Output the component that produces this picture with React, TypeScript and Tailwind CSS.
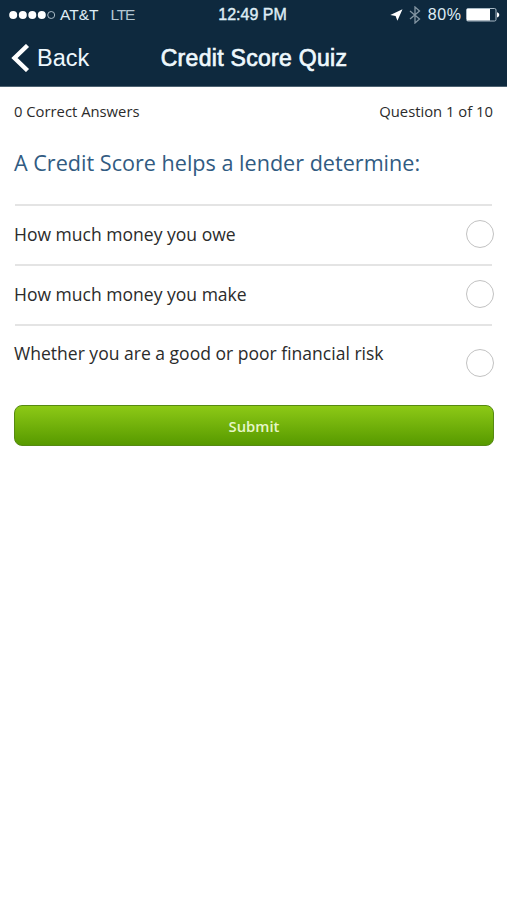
import { useState } from 'react';

const answers = [
    { id: 'owe', label: 'How much money you owe', row: 'h-[60px]', text: 'pb-[2px]', radio: 'pb-[2px]' },
    { id: 'make', label: 'How much money you make', row: 'h-[60px]', text: 'pb-[2px]', radio: 'pb-[2px]' },
    { id: 'risk', label: 'Whether you are a good or poor financial risk', row: 'h-[81px]', text: 'pb-[25px]', radio: 'pb-[5px]' },
];

function StatusBar() {
    return (
        <div className="grid h-[30px] grid-cols-3 items-center pr-[7px] pl-[9px] text-[16px] leading-[30px] text-[#dfedf5]">
            <div className="flex items-center whitespace-nowrap">
                <svg width="47" height="10" viewBox="0 0 47 10" fill="#fff">
                    <circle cx="4.2" cy="5" r="4" />
                    <circle cx="13.8" cy="5" r="4" />
                    <circle cx="23.3" cy="5" r="4" />
                    <circle cx="32.8" cy="5" r="4" />
                    <circle cx="42.2" cy="5" r="3.5" fill="none" stroke="#a9bac6" />
                </svg>
                <span className="ml-[4px] text-[15.5px]">AT&amp;T</span>
                <span className="ml-[12px] text-[15.5px] tracking-[-1.2px] text-[#b3c5d1]">LTE</span>
            </div>
            <div className="pr-[4px] text-center whitespace-nowrap [-webkit-text-stroke:0.4px_currentColor]">12:49 PM</div>
            <div className="flex items-center justify-end whitespace-nowrap">
                <svg width="13" height="12" viewBox="0 0 13 12" fill="#fff">
                    <path d="M12.5 0.3 0.3 6 5.6 6.9 7.4 11.8Z" />
                </svg>
                <svg className="ml-[6px]" width="12" height="18" viewBox="0 0 12 18" fill="none" stroke="#8496a3" strokeWidth="1.3">
                    <path d="M1 5 10.5 13 6 17V1L10.5 5 1 13" />
                </svg>
                <span className="ml-[7px] tracking-[0.6px]">80%</span>
                <svg className="ml-[4.5px]" width="34" height="14" viewBox="0 0 34 14">
                    <rect x="0.5" y="0.5" width="29.5" height="12.5" rx="1.5" fill="none" stroke="#a9bac6" />
                    <rect x="1" y="1" width="23" height="11.5" fill="#fff" />
                    <path d="M31 4.2c3 .8 3 4.4 0 5.2Z" fill="#fff" />
                </svg>
            </div>
        </div>
    );
}

export default function App() {
    const [selected, setSelected] = useState('');

    return (
        <div className="min-h-screen bg-white font-['Open_Sans',sans-serif] text-[#2b2b2b]">
            <header className="h-[87px] border-b border-[#4d6271] bg-[#0e293e] font-['Liberation_Sans',sans-serif]">
                <StatusBar />
                <div className="grid h-[56px] grid-cols-[150px_1fr_150px] items-center text-[#eef8fd]">
                    <button type="button" className="flex items-center pl-[11px] text-[23.5px]">
                        <svg width="19" height="28" viewBox="0 0 19 28" fill="none" stroke="#fff" strokeWidth="4.4">
                            <path d="M16.5 1.5 3.5 14 16.5 26.5" />
                        </svg>
                        <span className="ml-[7px] pt-[1px]">Back</span>
                    </button>
                    <h1 className="pl-[1px] text-center text-[23px] tracking-[0.3px] whitespace-nowrap [-webkit-text-stroke:0.7px_currentColor]">
                        Credit Score Quiz
                    </h1>
                </div>
            </header>

            <main className="px-[14px]">
                <div className="flex h-[48px] items-center justify-between text-[14.8px]">
                    <span>0 Correct Answers</span>
                    <span>Question 1 of 10</span>
                </div>
                <h2 className="h-[69px] pt-[12px] text-[21.6px] leading-[32px] whitespace-nowrap text-[#315b82]">
                    A Credit Score helps a lender determine:
                </h2>

                <div>
                    {answers.map((answer) => (
                        <label key={answer.id} className={`flex flex-col ${answer.row}`}>
                            <span className="mr-[1px] ml-[1px] h-[2px] shrink-0 bg-[#e4e4e4]" />
                            <span className="-mr-[1px] flex flex-1 justify-between">
                                <span className={`flex items-center text-[17.55px] whitespace-nowrap ${answer.text}`}>{answer.label}</span>
                                <span className={`flex items-center ${answer.radio}`}>
                                    <input
                                        type="radio"
                                        name="answer"
                                        checked={selected === answer.id}
                                        onChange={() => setSelected(answer.id)}
                                        className="size-[28px] appearance-none rounded-full border border-[#c2c2c2] bg-white checked:bg-[#6cb010]"
                                    />
                                </span>
                            </span>
                        </label>
                    ))}
                </div>

                <button
                    type="button"
                    className="-mr-[1px] block h-[41px] w-[calc(100%+1px)] rounded-[8px] border border-[#568a12] bg-linear-to-b from-[#8dc916] to-[#579a00] pt-[2px] text-[14.8px] font-semibold text-[#e6f6c8]"
                >
                    Submit
                </button>
            </main>
        </div>
    );
}
